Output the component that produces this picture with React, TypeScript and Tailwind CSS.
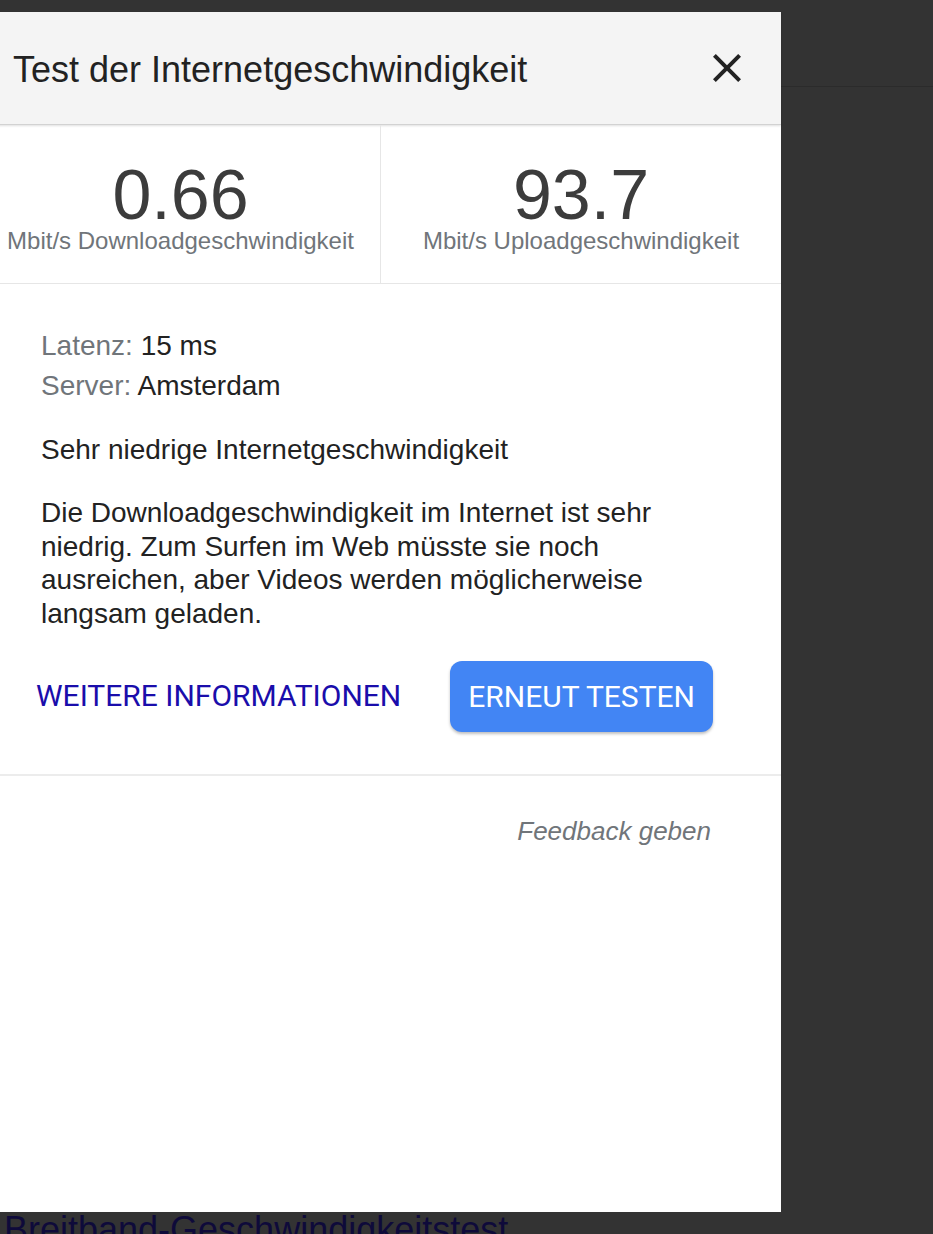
import React from "react";

const sans = "font-['Liberation_Sans',Arial,sans-serif]";
const roboto = "font-['Roboto','Liberation_Sans',sans-serif]";

const Stat = ({ value, label, divider }: { value: string; label: string; divider?: boolean }) => (
  <div
    className={`flex flex-col items-center pt-[38px] ${divider ? "border-r border-[#e6e6e6]" : ""}`}
  >
    <div className="text-[70px] leading-[64px] text-[#3c3c3c]">{value}</div>
    <div className="text-[24px] leading-[28px] text-[#70757a]">{label}</div>
  </div>
);

const CloseIcon = () => (
  <svg width="48" height="48" viewBox="0 0 24 24" fill="#222222">
    <path d="M19 6.41L17.59 5 12 10.59 6.41 5 5 6.41 10.59 12 5 17.59 6.41 19 12 13.41 17.59 19 19 17.59 13.41 12z" />
  </svg>
);

export default function App() {
  return (
    <div className={`relative h-[1234px] w-full overflow-hidden bg-[#333333] ${sans}`}>
      {/* page behind the overlay */}
      <div className="h-[87px] border-b border-[#2b2b2b]" />
      <div className="pl-[4px] pt-[1123px] text-[36px] leading-[40px] text-[#0e0a3a]">
        Breitband-Geschwindigkeitstest
      </div>

      {/* dialog */}
      <div className="absolute left-[-19px] top-[12px] flex h-[1200px] w-[800px] flex-col bg-white">
        <div className="flex h-[113px] items-center justify-between border-b border-[#d2d2d2] bg-[#f4f4f4] pl-[32px] pr-[30px] shadow-[0_1px_2px_rgba(0,0,0,0.12)]">
          <h1 className="pt-[3px] text-[36px] leading-[40px] text-[#222222]">Test der Internetgeschwindigkeit</h1>
          <button className="flex items-center justify-center">
            <CloseIcon />
          </button>
        </div>

        <div className="grid h-[159px] grid-cols-2 border-b border-[#e6e6e6]">
          <Stat value="0.66" label="Mbit/s Downloadgeschwindigkeit" divider />
          <Stat value="93.7" label="Mbit/s Uploadgeschwindigkeit" />
        </div>

        <div className="pb-[42px] pl-[60px] pr-[68px] pt-[42px] text-[28px] text-[#222222]">
          <div className="leading-[40px]">
            <span className="text-[#70757a]">Latenz:</span> 15 ms
          </div>
          <div className="leading-[40px]">
            <span className="text-[#70757a]">Server:</span> Amsterdam
          </div>
          <p className="mt-[27px] leading-[34px]">Sehr niedrige Internetgeschwindigkeit</p>
          <p className="mt-[29px] leading-[33.7px]">
            Die Downloadgeschwindigkeit im Internet ist sehr niedrig. Zum Surfen im Web müsste sie noch
            ausreichen, aber Videos werden möglicherweise langsam geladen.
          </p>
          <div className={`mt-[30px] flex items-center justify-end gap-[49px] ${roboto}`}>
            <a className="shrink-0 whitespace-nowrap text-[30px] uppercase leading-[36px] text-[#1a0dab]">
              Weitere Informationen
            </a>
            <button className="h-[71px] shrink-0 whitespace-nowrap rounded-[12px] bg-[#4285f4] px-[18px] text-[30px] uppercase text-white shadow-[0_2px_3px_rgba(0,0,0,0.25)]">
              Erneut testen
            </button>
          </div>
        </div>

        <div className="border-t-2 border-[#ececec] pr-[70px] pt-[40px] text-right">
          <span className="text-[26px] italic leading-[30px] text-[#70757a]">Feedback geben</span>
        </div>
      </div>
    </div>
  );
}
